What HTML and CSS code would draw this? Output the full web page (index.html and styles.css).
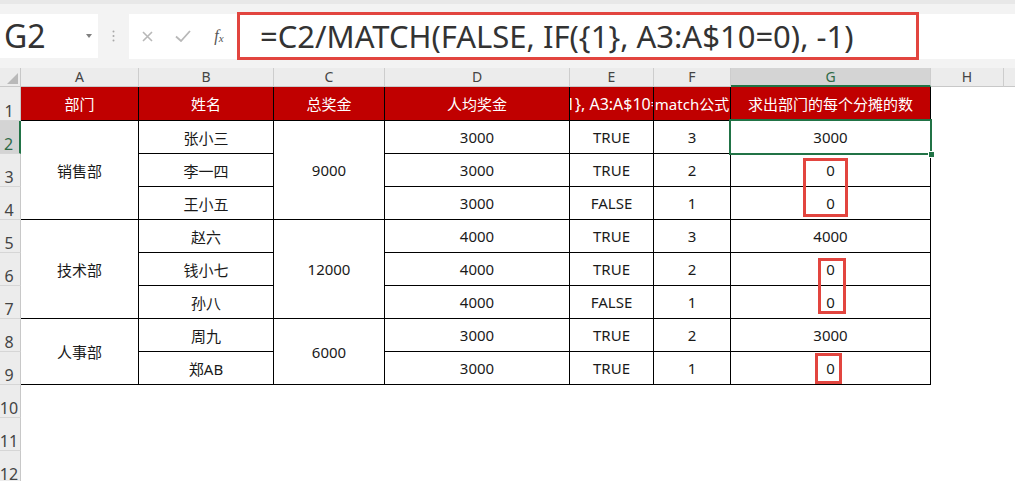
FILE: index.html
```html
<!DOCTYPE html>
<html lang="zh-CN">
<head>
<meta charset="utf-8">
<title>Excel</title>
<link rel="stylesheet" href="styles.css">
</head>
<body>
<div class="app">
  <div class="topbar">
    <div class="namebox"><span class="name">G2</span><span class="caret"></span></div>
    <div class="grip">
      <svg width="3" height="12" viewBox="0 0 3 12"><circle cx="1.5" cy="1.5" r="1" fill="#a8a8a8"/><circle cx="1.5" cy="6" r="1" fill="#a8a8a8"/><circle cx="1.5" cy="10.5" r="1" fill="#a8a8a8"/></svg>
    </div>
    <div class="fxbox">
      <span class="slot"><svg width="11" height="11" viewBox="0 0 11 11"><path d="M1 1 L10 10 M10 1 L1 10" stroke="#b8b8b8" stroke-width="1.6" fill="none"/></svg></span>
      <span class="slot"><svg width="16" height="12" viewBox="0 0 16 12"><path d="M1 6.5 L6 11 L15 1" stroke="#b8b8b8" stroke-width="1.8" fill="none"/></svg></span>
      <span class="slot fx"><span class="f">f</span><span class="xs">x</span></span>
    </div>
    <div class="formula">
      <div class="formula-hl">=C2/MATCH(FALSE, IF({1}, A3:A$10=0), -1)</div>
    </div>
  </div>

  <div class="sheet">
    <div class="corner"><span class="tri"></span></div>
    <div class="colheads">
      <div class="ch w-a">A</div>
      <div class="ch w-b">B</div>
      <div class="ch w-c">C</div>
      <div class="ch w-d">D</div>
      <div class="ch w-e">E</div>
      <div class="ch w-f">F</div>
      <div class="ch w-g sel">G</div>
      <div class="ch w-h">H</div>
      <div class="ch w-i"></div>
    </div>
    <div class="rowheads">
      <div class="rh first">1</div>
      <div class="rh sel">2</div>
      <div class="rh">3</div>
      <div class="rh">4</div>
      <div class="rh">5</div>
      <div class="rh">6</div>
      <div class="rh">7</div>
      <div class="rh">8</div>
      <div class="rh">9</div>
      <div class="rh">10</div>
      <div class="rh">11</div>
      <div class="rh">12</div>
    </div>
    <div class="body">
      <div class="table">
        <div class="c h">部门</div>
        <div class="c h">姓名</div>
        <div class="c h">总奖金</div>
        <div class="c h">人均奖金</div>
        <div class="c h clip">IF({1}, A3:A$10=0)</div>
        <div class="c h">match公式</div>
        <div class="c h">求出部门的每个分摊的数</div>

        <div class="c r3">销售部</div>
        <div class="c">张小三</div>
        <div class="c r3">9000</div>
        <div class="c">3000</div>
        <div class="c">TRUE</div>
        <div class="c">3</div>
        <div class="c">3000</div>

        <div class="c">李一四</div>
        <div class="c">3000</div>
        <div class="c">TRUE</div>
        <div class="c">2</div>
        <div class="c">0</div>

        <div class="c">王小五</div>
        <div class="c">3000</div>
        <div class="c">FALSE</div>
        <div class="c">1</div>
        <div class="c">0</div>

        <div class="c r3">技术部</div>
        <div class="c">赵六</div>
        <div class="c r3">12000</div>
        <div class="c">4000</div>
        <div class="c">TRUE</div>
        <div class="c">3</div>
        <div class="c">4000</div>

        <div class="c">钱小七</div>
        <div class="c">4000</div>
        <div class="c">TRUE</div>
        <div class="c">2</div>
        <div class="c">0</div>

        <div class="c">孙八</div>
        <div class="c">4000</div>
        <div class="c">FALSE</div>
        <div class="c">1</div>
        <div class="c">0</div>

        <div class="c r2">人事部</div>
        <div class="c">周九</div>
        <div class="c r2">6000</div>
        <div class="c">3000</div>
        <div class="c">TRUE</div>
        <div class="c">2</div>
        <div class="c">3000</div>

        <div class="c">郑AB</div>
        <div class="c">3000</div>
        <div class="c">TRUE</div>
        <div class="c">1</div>
        <div class="c">0</div>
      </div>

      <div class="selection"><span class="handle"></span></div>
      <div class="mark m1"></div>
      <div class="mark m2"></div>
      <div class="mark m3"></div>
    </div>
  </div>
</div>
</body>
</html>
```

FILE: styles.css
```css
* {
  box-sizing: border-box;
  margin: 0;
  padding: 0;
}

html, body {
  width: 1015px;
  height: 481px;
  overflow: hidden;
}

body {
  background: #fff;
  font-family: "Noto Sans", "Noto Sans CJK SC", sans-serif;
}

.app {
  display: flex;
  flex-direction: column;
  height: 481px;
}

/* ---------- top formula bar ---------- */
.topbar {
  height: 68px;
  flex: none;
  display: flex;
  align-items: center;
  padding: 8px 0 8px;
  background: #f3f3f3;
  border-top: 4px solid #e8e8e8;
}

.namebox {
  width: 98px;
  height: 44px;
  flex: none;
  background: #fff;
  display: flex;
  align-items: center;
  justify-content: space-between;
  padding: 0 6px 0 4px;
}

.name {
  font-size: 32px;
  line-height: 1;
  color: #333;
}

.caret {
  width: 0;
  height: 0;
  border-left: 3.5px solid transparent;
  border-right: 3.5px solid transparent;
  border-top: 4px solid #808080;
}

.grip {
  width: 31px;
  flex: none;
  display: flex;
  justify-content: center;
  align-items: center;
}

.fxbox {
  width: 108px;
  height: 45px;
  flex: none;
  background: #fff;
  display: flex;
  align-items: center;
}

.slot {
  width: 36px;
  display: flex;
  align-items: center;
  justify-content: center;
}

.fx {
  font-family: "Liberation Serif", serif;
  font-style: italic;
  color: #555;
  align-items: baseline;
}

.fx .f {
  font-size: 16px;
}

.fx .xs {
  font-size: 11px;
  position: relative;
  top: 1px;
}

.formula {
  flex: 1;
  height: 45px;
  background: #fff;
  display: flex;
  align-items: center;
}

.formula-hl {
  flex: none;
  width: 682px;
  height: 48px;
  border: 3px solid #e2453f;
  display: flex;
  align-items: center;
  padding-left: 20px;
  font-size: 31px;
  color: #333;
  white-space: nowrap;
}

/* ---------- sheet ---------- */
.sheet {
  flex: 1;
  display: grid;
  grid-template-columns: 21px 1fr;
  grid-template-rows: 19px 1fr;
  overflow: hidden;
}

.corner {
  background: #ececec;
  border-right: 1px solid #c8c8c8;
  border-bottom: 1px solid #c8c8c8;
  display: flex;
  align-items: flex-end;
  justify-content: flex-end;
  padding: 0 2px 2px 0;
}

.tri {
  width: 11px;
  height: 11px;
  background: #b9b9b9;
  clip-path: polygon(100% 0, 100% 100%, 0 100%);
}

.colheads {
  display: flex;
  background: #ececec;
  overflow: hidden;
}

.ch {
  flex: none;
  height: 19px;
  border-right: 1px solid #cdcdcd;
  border-bottom: 1px solid #c8c8c8;
  display: flex;
  align-items: center;
  justify-content: center;
  font-size: 14px;
  line-height: 1;
  color: #444;
}

.ch.sel {
  background: #d4d4d4;
  color: #2f6b47;
  border-bottom: 2px solid #217346;
}

.w-a { width: 118px; }
.w-b { width: 135px; }
.w-c { width: 111px; }
.w-d { width: 185px; }
.w-e { width: 84px; }
.w-f { width: 77px; }
.w-g { width: 200px; }
.w-h { width: 73px; }
.w-i { flex: 1; border-right: none; }

.rowheads {
  display: flex;
  flex-direction: column;
  background: #ececec;
  overflow: hidden;
}

.rh {
  flex: none;
  height: 33px;
  border-right: 1px solid #c8c8c8;
  border-bottom: 1px solid #d6d6d6;
  display: flex;
  align-items: flex-end;
  justify-content: center;
  font-size: 16px;
  line-height: 18px;
  color: #444;
  padding-right: 2px;
}

.rh.first {
  height: 34px;
}

.rh.sel {
  background: #d4d4d4;
  color: #2f6b47;
  border-right: 2px solid #217346;
}

.body {
  position: relative;
  background: #fff;
  overflow: hidden;
}

.table {
  display: grid;
  grid-template-columns: 117px 134px 110px 184px 83px 76px 199px;
  grid-template-rows: 33px repeat(8, 32px);
  gap: 1px;
  padding: 0 1px 1px 0;
  background: #000;
  width: max-content;
}

.c {
  background: #fff;
  display: flex;
  align-items: center;
  justify-content: center;
  font-size: 15px;
  color: #1a1a1a;
  white-space: nowrap;
  overflow: hidden;
}

.c.h {
  background: #c00000;
  color: #fff;
}

.c.clip {
  font-size: 16px;
  padding-right: 8px;
}

.r2 { grid-row: span 2; }
.r3 { grid-row: span 3; }

/* selected cell outline (overlay) */
.selection {
  position: absolute;
  left: 708px;
  top: 32px;
  width: 203px;
  height: 36px;
  border: 2px solid #217346;
}

.handle {
  position: absolute;
  right: -5px;
  bottom: -5px;
  width: 7px;
  height: 7px;
  background: #217346;
  border: 1px solid #fff;
}

/* red annotation boxes (overlay) */
.mark {
  position: absolute;
  border: 3px solid #e2453f;
}

.m1 { left: 782px; top: 71px; width: 45px; height: 59px; }
.m2 { left: 797px; top: 171px; width: 28px; height: 56px; }
.m3 { left: 794px; top: 266px; width: 27px; height: 31px; }
```
